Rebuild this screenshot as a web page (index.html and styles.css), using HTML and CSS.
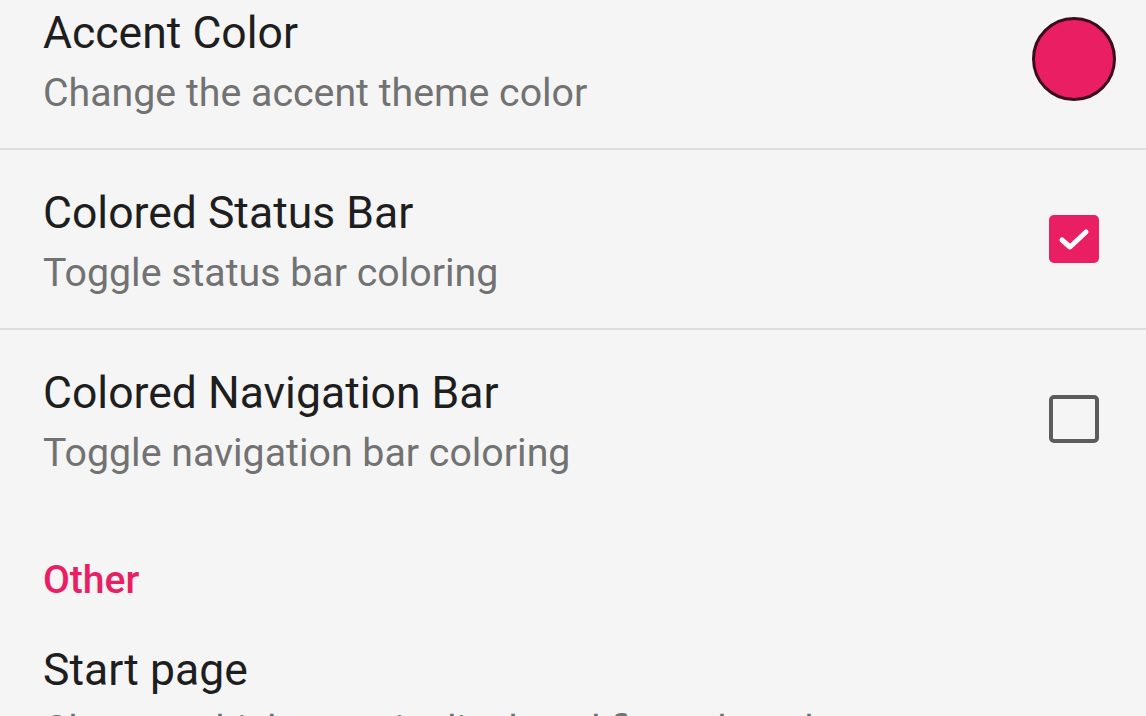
FILE: index.html
```html
<!DOCTYPE html>
<html lang="en">
<head>
  <meta charset="UTF-8" />
  <meta name="viewport" content="width=device-width, initial-scale=1.0" />
  <title>Settings</title>
  <link rel="stylesheet" href="styles.css">
</head>
<body>
  <div class="settings">
    <div class="pref">
      <div class="pref-text">
        <div class="pref-title">Accent Color</div>
        <div class="pref-summary">Change the accent theme color</div>
      </div>
      <div class="pref-widget">
        <span class="swatch"></span>
      </div>
    </div>

    <div class="pref">
      <div class="pref-text">
        <div class="pref-title">Colored Status Bar</div>
        <div class="pref-summary">Toggle status bar coloring</div>
      </div>
      <div class="pref-widget">
        <span class="checkbox checked">
          <svg viewBox="0 0 48 48" width="48" height="48">
            <path d="M12 25 L20 32 L36 17" fill="none" stroke="#fff" stroke-width="5" stroke-linecap="round" stroke-linejoin="round"/>
          </svg>
        </span>
      </div>
    </div>

    <div class="pref last">
      <div class="pref-text">
        <div class="pref-title">Colored Navigation Bar</div>
        <div class="pref-summary">Toggle navigation bar coloring</div>
      </div>
      <div class="pref-widget">
        <span class="checkbox"></span>
      </div>
    </div>

    <div class="category">Other</div>

    <div class="pref last">
      <div class="pref-text">
        <div class="pref-title">Start page</div>
        <div class="pref-summary">Choose which page is displayed first when the app opens</div>
      </div>
    </div>
  </div>
</body>
</html>
```

FILE: styles.css
```css
:root {
  --accent: #e91e63;
  --bg: #f5f5f5;
  --title: #1e1e1e;
  --summary: #727272;
  --divider: #dddddd;
}
html, body {
  height: 100%;
  overflow: hidden;
}
body {
  margin: 0;
  background-color: var(--bg);
  font-family: Roboto, "Liberation Sans", sans-serif;
}
.settings {
  margin-top: -30px;
}
.pref {
  display: flex;
  align-items: center;
  height: 180px;
  box-sizing: border-box;
  padding-left: 43px;
  border-bottom: 2px solid var(--divider);
}
.pref.last {
  border-bottom: none;
  height: 178px;
}
.pref-text {
  flex: 1;
  padding: 37px 0 32px;
}
.pref-title {
  font-size: 44.5px;
  line-height: 52px;
  color: var(--title);
}
.pref-summary {
  font-size: 39.3px;
  line-height: 46px;
  margin-top: 11px;
  color: var(--summary);
  white-space: nowrap;
}
.pref-widget {
  width: 84px;
  margin-right: 30px;
  display: flex;
  justify-content: center;
  align-items: center;
}
.swatch {
  width: 84px;
  height: 84px;
  box-sizing: border-box;
  border-radius: 50%;
  background-color: var(--accent);
  border: 3px solid #3b0d1c;
}
.checkbox {
  width: 50px;
  height: 48px;
  box-sizing: border-box;
  border-radius: 5px;
  border: 4px solid #5c5c5c;
  display: flex;
}
.checkbox.checked {
  background-color: var(--accent);
  border: none;
}
.checkbox svg {
  display: block;
  margin: auto;
}
.category {
  padding: 49px 0 4px 43px;
  font-size: 39px;
  line-height: 46px;
  font-weight: 500;
  color: var(--accent);
}
```
